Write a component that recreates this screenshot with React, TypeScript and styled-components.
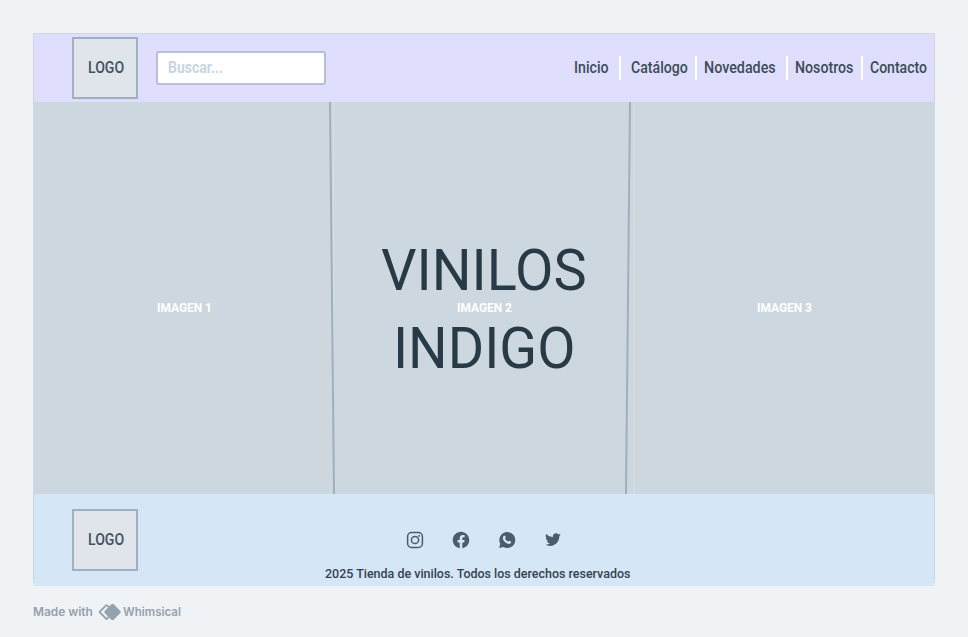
import React, { useLayoutEffect, useRef, useState } from "react";
import styled, { createGlobalStyle } from "styled-components";

const GlobalStyle = createGlobalStyle`
  *, *::before, *::after { box-sizing: border-box; }
  body {
    margin: 0;
    background: #eff3f6;
    color: #394b59;
    font-family: Roboto, "Liberation Sans", sans-serif;
  }
`;

const Page = styled.div`
  width: 968px;
  height: 637px;
  padding: 33px 33px 0;
  overflow: hidden;
`;

const Frame = styled.main`
  width: 902px;
  height: 553px;
  display: flex;
  flex-direction: column;
  padding: 1px 1px 0;
  background: linear-gradient(#cdd7e0, #cdd7e0) no-repeat 0 0 / 902px 550px;
`;

const Header = styled.header`
  height: 68px;
  flex: none;
  display: flex;
  align-items: center;
  padding: 0 7px 0 38px;
  background: #dfdefc;
`;

const LogoBox = styled.div`
  width: 66px;
  height: 62px;
  display: flex;
  align-items: center;
  justify-content: center;
  padding-left: 1px;
  border: 2px solid #9fb0be;
  background: #e0e4eb;
`;

const Search = styled.div`
  width: 170px;
  height: 34px;
  margin-left: 18px;
  display: flex;
  align-items: center;
  padding-left: 10px;
  border: 2px solid #b7bed8;
  border-radius: 3px;
  background: #fff;
`;

const Nav = styled.nav`
  margin-left: auto;
  display: flex;
  align-items: center;
`;

const Divider = styled.i<{ $before: number; $after: number }>`
  width: 2px;
  height: 24px;
  margin: 0 ${(p) => p.$after}px 0 ${(p) => p.$before}px;
  background: #fff;
`;

const Hero = styled.section`
  position: relative;
  height: 392px;
  flex: none;
  display: grid;
  grid-template-columns: repeat(3, 300px);
  background: #cdd7e0;
`;

const Slide = styled.div`
  display: flex;
  align-items: center;
  justify-content: center;
  padding: 20px 0 0 1px;
`;

const Seams = styled.svg`
  position: absolute;
  inset: 0;
`;

const Title = styled.h1`
  position: absolute;
  inset: 129px 0 auto;
  margin: 0;
  display: flex;
  flex-direction: column;
  align-items: center;
  font-weight: 400;
`;

const Footer = styled.footer`
  height: 92px;
  flex: none;
  display: grid;
  grid-template-columns: 252px 306px 1fr;
  padding: 15px 0 0 38px;
  background: #d5e6f6;
`;

const FooterCenter = styled.div`
  display: flex;
  flex-direction: column;
  align-items: center;
  padding-top: 22px;
`;

const Social = styled.div`
  display: flex;
  gap: 28.2px;
  margin: 0 0 15px 13.6px;
  color: #4b5d6b;
`;

const Credit = styled.div`
  height: 20px;
  margin-top: 16px;
  display: flex;
  align-items: center;
  color: #95a1ac;
`;

const CreditLogo = styled.svg`
  margin: 0 2px 0 5px;
`;

type FitProps = {
  $size: number;
  $weight: number;
  $color: string;
  $line?: number;
  $family?: string;
};

const FitBox = styled.span<{ $width: number }>`
  display: block;
  flex: none;
  width: ${(p) => p.$width}px;
`;

const FitText = styled.span<FitProps>`
  display: inline-block;
  vertical-align: top;
  white-space: nowrap;
  transform-origin: 0 50%;
  font-size: ${(p) => p.$size}px;
  font-weight: ${(p) => p.$weight};
  line-height: ${(p) => p.$line ?? 20}px;
  color: ${(p) => p.$color};
  font-family: ${(p) => p.$family ?? "inherit"};
`;

/* Condenses a line of text so that it fills the given width. */
function Fit({ width, children, ...rest }: FitProps & { width: number; children: string }) {
  const ref = useRef<HTMLSpanElement>(null);
  const [scale, setScale] = useState(1);
  useLayoutEffect(() => {
    if (ref.current) setScale(width / ref.current.offsetWidth);
  }, [width, children]);
  return (
    <FitBox $width={width}>
      <FitText ref={ref} {...rest} style={{ transform: `scaleX(${scale})` }}>
        {children}
      </FitText>
    </FitBox>
  );
}

const links = [
  { label: "Inicio", width: 34.5, before: 0, after: 0 },
  { label: "Catálogo", width: 56.5, before: 11, after: 9.5 },
  { label: "Novedades", width: 71.5, before: 8, after: 6.5 },
  { label: "Nosotros", width: 58.5, before: 11, after: 7 },
  { label: "Contacto", width: 57, before: 7.5, after: 7 },
];

const Logo = () => (
  <LogoBox>
    <Fit width={36} $size={16} $weight={500} $color="#43525f">LOGO</Fit>
  </LogoBox>
);

const Instagram = () => (
  <svg width="18" height="18" viewBox="0 0 18 18" fill="none" stroke="currentColor" strokeWidth="1.5">
    <rect x="1.6" y="1.6" width="14.8" height="14.8" rx="4" />
    <circle cx="9" cy="9" r="3.6" />
    <circle cx="13.1" cy="4.9" r="0.95" fill="currentColor" stroke="none" />
  </svg>
);

const Facebook = () => (
  <svg width="18" height="18" viewBox="0 0 24 24" fill="currentColor">
    <path d="M23 12.07C23 5.96 18.08 1 12 1S1 5.96 1 12.07c0 5.52 4.02 10.1 9.28 10.93v-7.73H7.49v-3.2h2.79V9.63c0-2.77 1.64-4.3 4.15-4.3 1.2 0 2.46.22 2.46.22v2.72H15.5c-1.36 0-1.79.85-1.79 1.72v2.08h3.05l-.49 3.2h-2.56V23C18.98 22.17 23 17.59 23 12.07z" />
  </svg>
);

const Whatsapp = () => (
  <svg width="18" height="18" viewBox="0 0 18 18">
    <path
      d="M9.2 1a8 8 0 1 1-3.8 15L1.2 17l1-4.3A8 8 0 0 1 9.2 1z"
      fill="currentColor"
    />
    <path
      d="M6.1 4.8c.5-.3.9-.2 1.1.3l.6 1.4c.1.4-.4.9-.7 1.3.7 1.3 1.7 2.2 3 2.8.5-.3.8-1 1.3-.8l1.5.7c.5.3.3 1.1-.1 1.6-1 1.2-2.5 1-4 .2-1.8-.9-3.2-2.5-3.8-4-.5-1.5-.1-2.7 1.1-3.5z"
      fill="#d5e6f6"
    />
  </svg>
);

const Twitter = () => (
  <svg width="18" height="18" viewBox="0 0 24 24" fill="currentColor">
    <path d="M22.46 5.1c-.77.35-1.6.58-2.46.69.88-.53 1.56-1.37 1.88-2.38-.83.5-1.75.85-2.72 1.05A4.26 4.26 0 0 0 16 3.1a4.28 4.28 0 0 0-4.17 5.25A12.1 12.1 0 0 1 3.01 3.88a4.28 4.28 0 0 0 1.33 5.71 4.2 4.2 0 0 1-1.94-.53v.05a4.28 4.28 0 0 0 3.44 4.2 4.3 4.3 0 0 1-1.93.07 4.28 4.28 0 0 0 4 2.98A8.6 8.6 0 0 1 1.5 18.1 12.13 12.13 0 0 0 8.12 20c7.88 0 12.2-6.53 12.2-12.19l-.01-.56c.84-.6 1.56-1.35 2.15-2.15z" />
  </svg>
);

export default function App() {
  return (
    <>
      <GlobalStyle />
      <Page>
        <Frame>
          <Header>
            <Logo />
            <Search>
              <Fit width={55} $size={16} $weight={700} $color="#cad5df">Buscar...</Fit>
            </Search>
            <Nav>
              {links.map((link, i) => (
                <React.Fragment key={link.label}>
                  {i > 0 && <Divider $before={link.before} $after={link.after} />}
                  <Fit width={link.width} $size={16} $weight={500} $color="#3c4c5a">
                    {link.label}
                  </Fit>
                </React.Fragment>
              ))}
            </Nav>
          </Header>
          <Hero>
            <Seams width="900" height="392" fill="none">
              <path d="M299.5 0V392M600.5 0V392" stroke="#d4dee5" />
              <path d="M296 0L300 392M596 0L592 392" stroke="#9fafbc" strokeWidth="2" />
            </Seams>
            <Title>
              <Fit width={206} $size={58} $weight={400} $color="#293a47" $line={78}>VINILOS</Fit>
              <Fit width={182} $size={58} $weight={400} $color="#293a47" $line={78}>INDIGO</Fit>
            </Title>
            {[1, 2, 3].map((n) => (
              <Slide key={n}>
                <Fit width={55} $size={13} $weight={700} $color="#fff">{`IMAGEN ${n}`}</Fit>
              </Slide>
            ))}
          </Hero>
          <Footer>
            <Logo />
            <FooterCenter>
              <Social>
                <Instagram />
                <Facebook />
                <Whatsapp />
                <Twitter />
              </Social>
              <Fit width={305} $size={13} $weight={500} $color="#33434f">
                2025 Tienda de vinilos. Todos los derechos reservados
              </Fit>
            </FooterCenter>
          </Footer>
        </Frame>
        <Credit>
          <Fit width={60} $size={11.5} $weight={600} $color="#95a1ac" $family="Inter, sans-serif">Made with</Fit>
          <CreditLogo width="23" height="18" viewBox="0 0 23 18">
            <path d="M8.5 1.8L1.5 9l7 7.2 2.2-2.2M8.5 1.8l2.2 2.2" fill="none" stroke="currentColor" strokeWidth="1.8" strokeLinejoin="round" />
            <path d="M13.1 1.4q1.4-1.2 2.8 0l6.2 6.3q1.2 1.3 0 2.6l-6.2 6.3q-1.4 1.2-2.8 0L6.9 10.3q-1.2-1.3 0-2.6z" fill="currentColor" />
          </CreditLogo>
          <Fit width={58} $size={11.5} $weight={600} $color="#95a1ac" $family="Inter, sans-serif">Whimsical</Fit>
        </Credit>
      </Page>
    </>
  );
}
